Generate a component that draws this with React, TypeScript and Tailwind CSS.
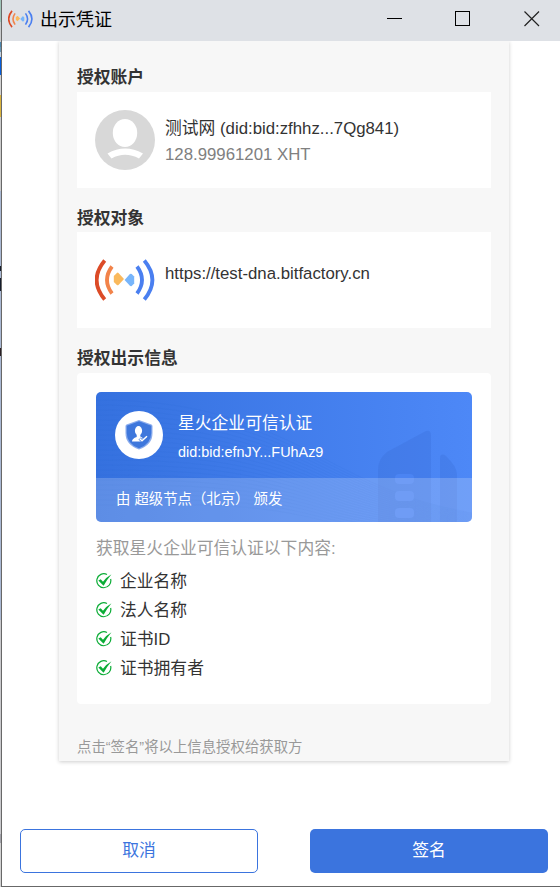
import React from 'react';

function SignalLogo({ className }: { className: string }) {
  return (
    <svg viewBox="0 0 60 42" className={className} fill="none">
      <path d="M9.700 1.500 Q-6.500 21 9.700 40.500" stroke="#dc4b27" strokeWidth="3.8" />
      <path d="M17 7.500 Q7 21 17 34.500" stroke="#f2834a" strokeWidth="3.8" />
      <path d="M18.800 17L21.900 13.900Q22.700 13.300 23.500 14L29 20L23.500 26Q22.700 26.700 21.900 26L18.800 23Z" fill="#fab95c" />
      <path d="M39.200 17.500L36.700 15Q35.800 14.300 34.900 15.100L29.600 21L34.900 26.800Q35.800 27.600 36.700 26.900L39.200 24.500Z" fill="#77b5fb" />
      <path d="M42 7.500 Q52 21 42 34.500" stroke="#4a7ff0" strokeWidth="3.8" />
      <path d="M49.300 1.500 Q65.500 21 49.300 40.500" stroke="#4a7ff0" strokeWidth="3.8" />
    </svg>
  );
}

function TitleBar() {
  return (
    <header className="flex h-[41px] shrink-0 items-center bg-[#dee1e6] pl-[6px] text-black">
      <SignalLogo className="mb-[3px] h-[18px] w-[25px]" />
      <h1 className="mb-px ml-[7px] text-[18px] leading-[26px]">出示凭证</h1>
      <div className="mb-[3px] ml-auto flex items-center pr-[20px]">
        <svg className="mr-[52px]" width="16" height="16" shapeRendering="crispEdges"><path d="M0 7.500H15" stroke="#000" /></svg>
        <svg className="mr-[53px]" width="16" height="16" shapeRendering="crispEdges"><path d="M.5 .5H14.500V14.500H.5Z" fill="none" stroke="#000" /></svg>
        <svg width="16" height="16"><path d="M.5 .5L15 15M15 .5L.5 15" stroke="#222" strokeWidth="1.200" /></svg>
      </div>
    </header>
  );
}

function Avatar() {
  return (
    <svg viewBox="0 0 60 60" className="size-[60px] shrink-0">
      <circle cx="30" cy="30" r="30" fill="#d8d8d8" />
      <ellipse cx="30" cy="23" rx="12.200" ry="14" fill="#fff" />
      <path d="M12.500 43.500Q30 33.500 48 43.500L44 48.500Q30 41 16.500 48.500Z" fill="#fff" />
    </svg>
  );
}

function ShieldBadge() {
  return (
    <svg viewBox="0 0 48 48" className="size-[48px] shrink-0">
      <circle cx="24" cy="24" r="24" fill="#fff" />
      <path d="M24 9L36.500 13.500Q37.500 14 37.500 15V22Q37.500 34 24 38.500Q10.500 34 10.500 22V15Q10.500 14 11.500 13.500Z" fill="#8aaced" />
      <path d="M24 10.300L36.300 14.700V22Q36 33 24 37.300Q12 33 11.700 22V14.700Z" fill="#3e77dc" />
      <ellipse cx="23.500" cy="19.800" rx="3.600" ry="4.700" fill="#fff" />
      <path d="M21.700 22H25.300V25.500L28.500 27.500L26 30.500H17Q17 27.500 21.700 26Z" fill="#fff" />
      <path d="M24.500 27.500L27 29.800L32 25.300" fill="none" stroke="#3e77dc" strokeWidth="3" />
      <path d="M24.500 27.500L27 29.800L32 25.300" fill="none" stroke="#fff" strokeWidth="1.500" />
    </svg>
  );
}

function CardArt() {
  const waves = Array.from({ length: 22 }, (_, i) => i);
  return (
    <svg viewBox="0 0 376 130" className="absolute inset-0 h-full w-full" fill="none">
      {waves.map((i) => (
        <path key={i} d={`M0 ${8 + i * 5}C90 ${8 + i * 5} 150 ${25 + i * 4} 225 ${65 + i * 3}S330 ${112 + i} 376 ${121 + i}`} stroke="#2563cf" strokeOpacity=".08" />
      ))}
      <path d="M282 130V78Q282 67 291 60L328 40Q335 36 335 44V130ZM344 130V67Q344 60 350 64Q361 75 361 82V130Z" fill="#3568cf" fillOpacity=".26" />
      <g fill="#4b84f3">
        <rect x="299" y="82" width="19" height="10" rx="4" />
        <rect x="299" y="99" width="19" height="10" rx="4" />
        <rect x="299" y="116" width="19" height="10" rx="4" />
      </g>
    </svg>
  );
}

function CredentialCard() {
  return (
    <div className="relative h-[130px] overflow-hidden rounded-[5px] bg-linear-to-r from-[#3571df] to-[#4d88f7] text-white">
      <CardArt />
      <div className="relative flex h-[86px] gap-[15px] pt-[19px] pl-[19px]">
        <ShieldBadge />
        <div className="pt-px">
          <div className="text-[16.800px] leading-[24px]">星火企业可信认证</div>
          <div className="mt-[5px] text-[14.400px] leading-[22px]">did:bid:efnJY...FUhAz9</div>
        </div>
      </div>
      <div className="relative flex h-[44px] items-center bg-white/20 pl-[20px] text-[14.400px]">
        <span className="whitespace-pre">由 超级节点（北京） 颁发</span>
      </div>
    </div>
  );
}

function CheckIcon() {
  return (
    <svg viewBox="0 0 16 16" className="mb-[2px] size-[16px]" fill="none">
      <path d="M11 1.500A7 7 0 1 0 14.600 6" stroke="#0bac36" strokeWidth="1.200" />
      <path d="M2.300 7.500L4.700 6.300L7 8.700Q10.500 4 15.500 1.200Q11 6.500 7.600 12.800Z" fill="#0bac36" />
    </svg>
  );
}

const fields = ['企业名称', '法人名称', '证书ID', '证书拥有者'];

const strip = [
  ['h-[22px]', 'bg-[#9fc4b9]'],
  ['h-[20px]', 'bg-[#c9cbcd]'],
  ['h-[5px]', 'bg-[#4b86ad]'],
  ['h-[5px]', 'bg-[#6796b5]'],
  ['h-[5px]', 'bg-[#c5d2df]'],
  ['h-[18px]', 'bg-[#075edb]'],
  ['h-[20px]', 'bg-[#d2d2d2]'],
  ['h-[22px]', 'bg-[#dab43d]'],
  ['h-[74px]', 'bg-[#cbcbcb]'],
  ['h-[75px]', 'bg-[#a9b8d3]'],
  ['h-[5px]', 'bg-[#151d2c]'],
  ['h-[7px]', 'bg-[#a9b8d3]'],
  ['h-[13px]', 'bg-[#151d2c]'],
  ['h-[57px]', 'bg-[#a9b8d3]'],
  ['h-[8px]', 'bg-[#2a2024]'],
  ['h-[264px]', 'bg-[#a9b8d3]'],
  ['h-[214px]', 'bg-[#c9c9cc]'],
  ['h-[9px]', 'bg-[#a2a2a9]'],
  ['h-[44px]', 'bg-[#d2d2d2]'],
];

export default function App() {
  return (
    <div className="flex h-[887px] w-[560px] overflow-hidden bg-white font-['Liberation_Sans','Noto_Sans_CJK_SC',sans-serif] text-[#333]">
      <div className="w-px shrink-0">
        {strip.map(([height, color], i) => <div key={i} className={`${height} ${color}`} />)}
      </div>
      <div className="flex min-w-0 flex-1 flex-col border-b border-l border-[#686868]">
        <TitleBar />
        <main className="ml-[57px] h-[720px] w-[450px] shrink-0 bg-[#f7f7f7] px-[18px] pt-[25px] shadow-[0_1px_4px_rgba(0,0,0,.2)] [clip-path:inset(0_-8px_-8px_-8px)]">
          <h2 className="h-[26px] text-[16.800px] leading-[24px] font-bold">授权账户</h2>
          <section className="flex h-[96px] gap-[10px] bg-white pt-[18px] pl-[18px]">
            <Avatar />
            <div className="pt-[6px] text-[16.800px] leading-[26px]">
              <div className="whitespace-nowrap">测试网 (did:bid:zfhhz...7Qg841)</div>
              <div className="text-[#808080]">128.99961201 XHT</div>
            </div>
          </section>
          <h2 className="mt-[19px] h-[25px] text-[16.800px] leading-[24px] font-bold">授权对象</h2>
          <section className="flex h-[96px] gap-[10px] bg-white pt-[18px] pl-[18px]">
            <SignalLogo className="mt-[9px] h-[42px] w-[60px] shrink-0" />
            <div className="pt-[12px] text-[16.800px] leading-[24px]">https://test-dna.bitfactory.cn</div>
          </section>
          <h2 className="mt-[19px] h-[26px] text-[16.800px] leading-[24px] font-bold">授权出示信息</h2>
          <section className="h-[331px] rounded-[4px] bg-white px-[19px] pt-[19px]">
            <CredentialCard />
            <p className="mt-[15px] text-[16.800px] leading-[24px] text-[#999]">获取星火企业可信认证以下内容:</p>
            <ul className="mt-[6px]">
              {fields.map((field) => (
                <li key={field} className="flex h-[29px] items-center gap-[8px] text-[16.800px] leading-[24px]">
                  <CheckIcon />
                  <span>{field}</span>
                </li>
              ))}
            </ul>
          </section>
          <p className="mt-[32px] text-[14.400px] leading-[22px] text-[#999]">点击“签名”将以上信息授权给获取方</p>
        </main>
        <footer className="mt-[68px] flex justify-between pr-[12px] pl-[18px] text-[16.800px]">
          <button className="h-[44px] w-[238px] rounded-[5px] border border-[#3b74de] bg-white text-[#3b74de]">取消</button>
          <button className="h-[44px] w-[238px] rounded-[5px] bg-[#3b74de] text-white">签名</button>
        </footer>
      </div>
    </div>
  );
}
